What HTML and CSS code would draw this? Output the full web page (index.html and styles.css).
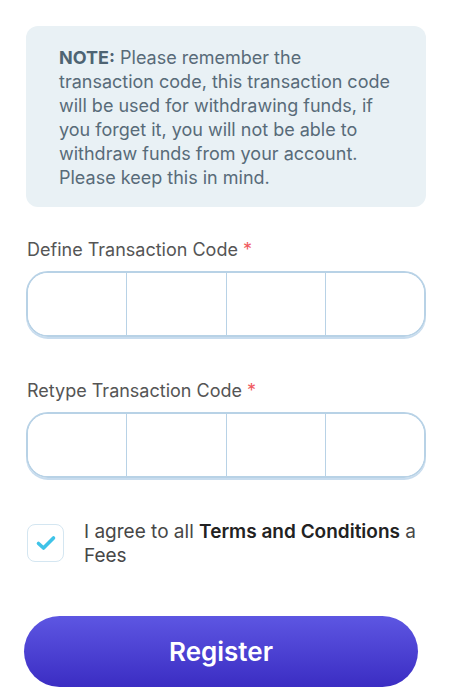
FILE: index.html
```html
<!DOCTYPE html>
<html>
    <head>
        <title>Transaction Code</title>
        <link rel="stylesheet" href="styles.css">
    </head>
    <body>
        <div class="page">
            <div class="note">
                <b>NOTE:</b> Please remember the transaction code, this transaction code will be used for withdrawing funds, if you forget it, you will not be able to withdraw funds from your account. Please keep this in mind.
            </div>

            <label class="label">Define Transaction Code <span class="req">*</span></label>
            <div class="code">
                <input type="password" maxlength="1">
                <input type="password" maxlength="1">
                <input type="password" maxlength="1">
                <input type="password" maxlength="1">
            </div>

            <label class="label second">Retype Transaction Code <span class="req">*</span></label>
            <div class="code">
                <input type="password" maxlength="1">
                <input type="password" maxlength="1">
                <input type="password" maxlength="1">
                <input type="password" maxlength="1">
            </div>

            <div class="agree">
                <span class="check">
                    <svg width="24" height="24" viewBox="0 0 24 24">
                        <path d="M4.5 12.5 L9.5 17 L19.5 7" fill="none" stroke="#3fc3e8" stroke-width="3.6" stroke-linecap="round" stroke-linejoin="round"/>
                    </svg>
                </span>
                <p>I agree to all <strong>Terms and Conditions</strong> a<br>Fees</p>
            </div>

            <button id="register">Register</button>
        </div>
    </body>
</html>
```

FILE: styles.css
```css
body
{
    margin:0;
    background:white;
    font-family: 'Inter', sans-serif;
    overflow:hidden;
}
.page
{
    padding:26px 26px 0 26px;
    display:flex;
    flex-direction: column;
}
.note
{
    background-color: #e9f1f5;
    border-radius: 12px;
    padding:20px 31px 17px 33px;
    color:#586b79;
    font-size:18px;
    line-height:24px;
}
.note b
{
    color:#4e6473;
}
.label
{
    margin-top:31px;
    font-size:18px;
    line-height:24px;
    color:#555555;
    padding-left:1px;
}
.label.second
{
    margin-top:42px;
}
.req
{
    color:#f05a5e;
}
.code
{
    margin-top:9px;
    display:flex;
    height:66px;
    border:2px solid #b8d2e6;
    border-radius: 22px;
    box-shadow: 0 2px 0 #c8dcee;
    overflow:hidden;
    box-sizing:border-box;
}
.code input
{
    flex:1;
    min-width:0;
    border:none;
    border-left:1.5px solid #b8d2e6;
    outline:none;
    background:white;
    font-size:24px;
    text-align:center;
}
.code input:first-child
{
    border-left:none;
}
.agree
{
    margin-top:42px;
    display:flex;
    align-items:flex-start;
    gap:20px;
}
.check
{
    margin-top:4px;
    margin-left:1px;
    width:37px;
    height:38px;
    box-sizing:border-box;
    border:1.5px solid #d4e6f1;
    border-radius: 8px;
    display:flex;
    justify-content: center;
    align-items: center;
    flex-shrink:0;
}
.agree p
{
    margin:0;
    font-size:19px;
    line-height:24px;
    color:#474747;
    white-space:nowrap;
}
.agree strong
{
    color:#222;
    font-weight:600;
}
#register
{
    margin-top:48px;
    margin-left:-2px;
    width:394px;
    height:71px;
    border:none;
    border-radius: 36px;
    background: linear-gradient(180deg, #5d56e2, #3b2dc3);
    color:white;
    font-family: 'Inter', sans-serif;
    font-size:26px;
    font-weight:600;
    cursor:pointer;
}
```
